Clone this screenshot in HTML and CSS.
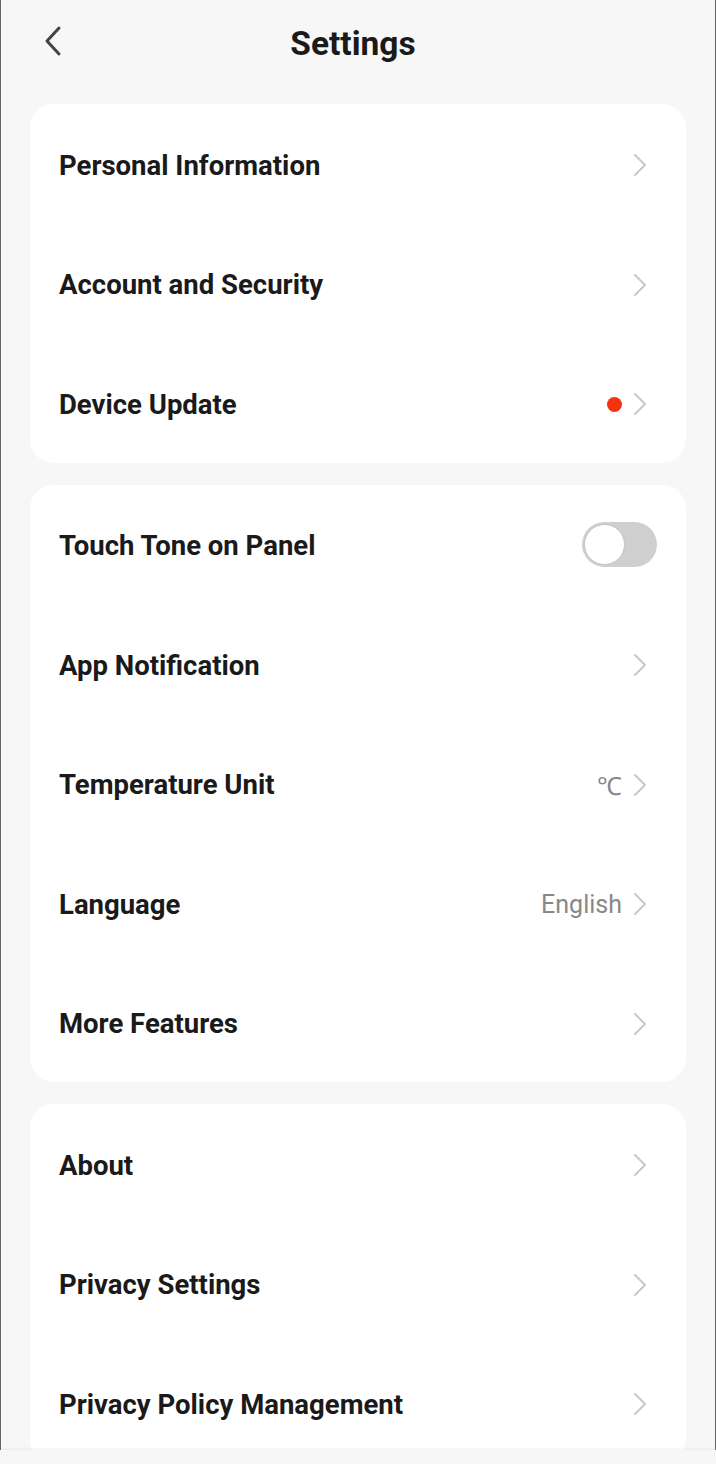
FILE: index.html
```html
<!DOCTYPE html>
<html lang="en">
<head>
<meta charset="UTF-8">
<meta name="viewport" content="width=device-width, initial-scale=1.0">
<title>Settings</title>
<link rel="stylesheet" href="styles.css">
</head>
<body>

<div class="topbar">
  <svg class="back" width="22" height="32" viewBox="0 0 22 32"><path d="M17 3 L5 16 L17 29" fill="none" stroke="#444" stroke-width="3" stroke-linecap="round" stroke-linejoin="round"/></svg>
  <h1>Settings</h1>
</div>

<div class="card">
  <div class="row"><span class="label">Personal Information</span><span class="right"><svg class="chev" viewBox="0 0 14 24"><path d="M2 2 L12 12 L2 22"/></svg></span></div>
  <div class="row"><span class="label">Account and Security</span><span class="right"><svg class="chev" viewBox="0 0 14 24"><path d="M2 2 L12 12 L2 22"/></svg></span></div>
  <div class="row"><span class="label">Device Update</span><span class="right"><span class="dot"></span><svg class="chev" viewBox="0 0 14 24"><path d="M2 2 L12 12 L2 22"/></svg></span></div>
</div>

<div class="card">
  <div class="row"><span class="label">Touch Tone on Panel</span><span class="right"><span class="toggle"><span class="knob"></span></span></span></div>
  <div class="row"><span class="label">App Notification</span><span class="right"><svg class="chev" viewBox="0 0 14 24"><path d="M2 2 L12 12 L2 22"/></svg></span></div>
  <div class="row"><span class="label">Temperature Unit</span><span class="right"><span class="value">&#8451;</span><svg class="chev" viewBox="0 0 14 24"><path d="M2 2 L12 12 L2 22"/></svg></span></div>
  <div class="row"><span class="label">Language</span><span class="right"><span class="value">English</span><svg class="chev" viewBox="0 0 14 24"><path d="M2 2 L12 12 L2 22"/></svg></span></div>
  <div class="row"><span class="label">More Features</span><span class="right"><svg class="chev" viewBox="0 0 14 24"><path d="M2 2 L12 12 L2 22"/></svg></span></div>
</div>

<div class="card">
  <div class="row"><span class="label">About</span><span class="right"><svg class="chev" viewBox="0 0 14 24"><path d="M2 2 L12 12 L2 22"/></svg></span></div>
  <div class="row"><span class="label">Privacy Settings</span><span class="right"><svg class="chev" viewBox="0 0 14 24"><path d="M2 2 L12 12 L2 22"/></svg></span></div>
  <div class="row"><span class="label">Privacy Policy Management</span><span class="right"><svg class="chev" viewBox="0 0 14 24"><path d="M2 2 L12 12 L2 22"/></svg></span></div>
</div>

<div class="bottombar"></div>

</body>
</html>
```

FILE: styles.css
```css
html { background: #f7f7f7; }
body {
  font-family: Roboto, "Liberation Sans", sans-serif;
  margin: 0;
  padding: 0 29px;
  height: 1464px;
  box-sizing: border-box;
  overflow: hidden;
  background: #f7f7f7;
  border-left: 1px solid #666;
  border-right: 1px solid #666;
  color: #1a1a1a;
}
.topbar {
  position: relative;
  height: 104px;
  display: flex;
  justify-content: center;
}
.topbar h1 {
  margin: 0 10px 0 0;
  padding-top: 22px;
  font-size: 33.5px;
  font-weight: 700;
  line-height: 44px;
  height: 44px;
}
.back { position: absolute; left: 12px; top: 25px; }
.card {
  background: #fff;
  border-radius: 24px;
  margin-bottom: 22px;
  overflow: hidden;
}
.row {
  height: 119.5px;
  box-sizing: border-box;
  display: flex;
  align-items: center;
  justify-content: space-between;
  padding: 3px 39px 0 29px;
}
.label { font-size: 27.5px; font-weight: 700; }
.right { display: flex; align-items: center; gap: 11px; }
.chev {
  display: block;
  width: 14px; height: 24px;
  fill: none;
  stroke: #c8c8c8;
  stroke-width: 2;
  stroke-linecap: round;
  stroke-linejoin: round;
}
.dot { width: 15px; height: 15px; border-radius: 50%; background: #f2330d; }
.value { font-size: 25px; color: #888; }
.toggle {
  width: 75px; height: 45px;
  border-radius: 23px;
  background: #cfcfcf;
  margin-right: -10px;
  margin-top: -3px;
  display: flex; align-items: center;
  padding-left: 2px;
  box-sizing: border-box;
}
.knob {
  width: 41px; height: 41px;
  border-radius: 50%;
  background: #fff;
  box-sizing: border-box;
  border: 1px solid #c4c4c4;
}
.bottombar {
  position: fixed;
  left: 0; right: 0; bottom: 0;
  height: 14px;
  background: #f7f7f7;
  box-shadow: 0 -1px 3px rgba(0,0,0,0.06);
}
```
